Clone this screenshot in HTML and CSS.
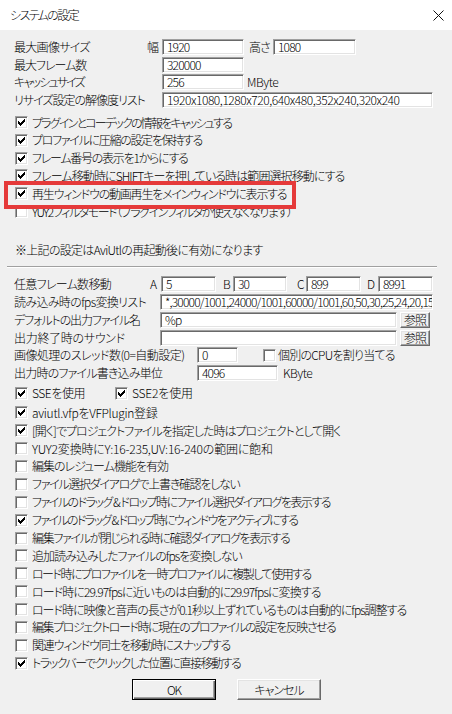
FILE: index.html
```html
<!DOCTYPE html>
<html lang="ja">
<head>
<meta charset="utf-8">
<title>システムの設定</title>
<link rel="stylesheet" href="styles.css">
</head>
<body>
<div class="window">
  <header class="titlebar">
    <span class="title t16">システムの設定</span>
    <svg class="close" width="11" height="11" viewBox="0 0 11 11"><path d="M0.5 0.5L10.5 10.5M10.5 0.5L0.5 10.5" stroke="#111" stroke-width="1" fill="none"/></svg>
  </header>
  <main class="client">
    <section class="sec1">
      <div class="row">
        <span class="lbl w133 t07">最大画像サイズ</span>
        <span class="pfx w15">幅</span>
        <div class="edit w82">1920</div>
        <span class="pfx2">高さ</span>
        <div class="edit w83">1080</div>
      </div>
      <div class="row">
        <span class="lbl w148">最大フレーム数</span>
        <div class="edit w82">320000</div>
      </div>
      <div class="row">
        <span class="lbl w148 t18">キャッシュサイズ</span>
        <div class="edit w82">256</div>
        <span class="unit">MByte</span>
      </div>
      <div class="row">
        <span class="lbl w148">リサイズ設定の解像度リスト</span>
        <div class="edit w271 e045">1920x1080,1280x720,640x480,352x240,320x240</div>
      </div>

      <div class="checks checks1">
        <label class="row crow"><span class="cb on"></span><span class="ct t18">プラグインとコーデックの情報をキャッシュする</span></label>
        <label class="row crow"><span class="cb on"></span><span class="ct t13">プロファイルに圧縮の設定を保持する</span></label>
        <label class="row crow"><span class="cb on"></span><span class="ct t125">フレーム番号の表示を1からにする</span></label>
        <label class="row crow"><span class="cb on"></span><span class="ct t09">フレーム移動時にSHIFTキーを押している時は範囲選択移動にする</span></label>
        <label class="row crow"><span class="cb on"></span><span class="ct t12">再生ウィンドウの動画再生をメインウィンドウに表示する</span></label>
        <label class="row crow"><span class="cb"></span><span class="ct t145">YUY2フィルタモード（プラグインフィルタが使えなくなります）</span></label>
        <div class="highlight"></div>
      </div>

      <p class="note t07">※上記の設定はAviUtlの再起動後に有効になります</p>
    </section>

    <hr class="sep">

    <section class="sec2">
      <div class="row">
        <span class="lbl w136 t07">任意フレーム数移動</span>
        <span class="key ka">A</span>
        <div class="edit w55">5</div>
        <span class="key kb">B</span>
        <div class="edit w54">30</div>
        <span class="key kc">C</span>
        <div class="edit w55">899</div>
        <span class="key kd">D</span>
        <div class="edit w55">8991</div>
      </div>
      <div class="row">
        <span class="lbl w146 t065">読み込み時のfps変換リスト</span>
        <div class="edit w273">*,30000/1001,24000/1001,60000/1001,60,50,30,25,24,20,15,12,10,8,5,1</div>
      </div>
      <div class="row">
        <span class="lbl w146 t11">デフォルトの出力ファイル名</span>
        <div class="edit w237">%p</div>
        <button class="btn ref" type="button">参照</button>
      </div>
      <div class="row">
        <span class="lbl w146 t03">出力終了時のサウンド</span>
        <div class="edit w237"></div>
        <button class="btn ref" type="button">参照</button>
      </div>
      <div class="row">
        <span class="lbl w183 t055">画像処理のスレッド数(0=自動設定)</span>
        <div class="edit w41">0</div>
        <label class="inline-check cpu"><span class="cb"></span><span class="ct t075">個別のCPUを割り当てる</span></label>
      </div>
      <div class="row">
        <span class="lbl w183 t08">出力時のファイル書き込み単位</span>
        <div class="edit w81">4096</div>
        <span class="unit u5">KByte</span>
      </div>

      <div class="row crow sse">
        <label class="inline-check sse1"><span class="cb on"></span><span class="ct t045">SSEを使用</span></label>
        <label class="inline-check sse2"><span class="cb on"></span><span class="ct t02">SSE2を使用</span></label>
      </div>

      <div class="checks checks2">
        <label class="row crow"><span class="cb on"></span><span class="ct t03">aviutl.vfpをVFPlugin登録</span></label>
        <label class="row crow"><span class="cb on"></span><span class="ct">[開く]でプロジェクトファイルを指定した時はプロジェクトとして開く</span></label>
        <label class="row crow"><span class="cb"></span><span class="ct t02">YUY2変換時にY:16-235,UV:16-240の範囲に飽和</span></label>
        <label class="row crow"><span class="cb"></span><span class="ct">編集のレジューム機能を有効</span></label>
        <label class="row crow"><span class="cb"></span><span class="ct t13">ファイル選択ダイアログで上書き確認をしない</span></label>
        <label class="row crow"><span class="cb"></span><span class="ct t15">ファイルのドラッグ &amp; ドロップ時にファイル選択ダイアログを表示する</span></label>
        <label class="row crow"><span class="cb on"></span><span class="ct t165">ファイルのドラッグ &amp; ドロップ時にウィンドウをアクティブにする</span></label>
        <label class="row crow"><span class="cb"></span><span class="ct t135">編集ファイルが閉じられる時に確認ダイアログを表示する</span></label>
        <label class="row crow"><span class="cb"></span><span class="ct t095">追加読み込みしたファイルのfpsを変換しない</span></label>
        <label class="row crow"><span class="cb"></span><span class="ct t15">ロード時にプロファイルを一時プロファイルに複製して使用する</span></label>
        <label class="row crow"><span class="cb"></span><span class="ct t09">ロード時に29.97fpsに近いものは自動的に29.97fpsに変換する</span></label>
        <label class="row crow"><span class="cb"></span><span class="ct">ロード時に映像と音声の長さが0.1秒以上ずれているものは自動的にfps調整する</span></label>
        <label class="row crow"><span class="cb"></span><span class="ct t145">編集プロジェクトロード時に現在のプロファイルの設定を反映させる</span></label>
        <label class="row crow"><span class="cb"></span><span class="ct t12">関連ウィンドウ同士を移動時にスナップする</span></label>
        <label class="row crow"><span class="cb on"></span><span class="ct t145">トラックバーでクリックした位置に直接移動する</span></label>
      </div>
    </section>

    <footer class="buttons">
      <button class="btn main ok" type="button">OK</button>
      <button class="btn main" type="button">キャンセル</button>
    </footer>
  </main>
</div>
</body>
</html>
```

FILE: styles.css
```css
* { box-sizing: border-box; }

html, body {
  margin: 0;
  padding: 0;
}

body {
  width: 452px;
  height: 714px;
  overflow: hidden;
  background: #f0f0f0;
  color: #000;
  font-family: "Noto Sans CJK JP", "Liberation Sans", sans-serif;
  font-size: 12px;
  font-weight: 300;
  letter-spacing: -1px;
  font-feature-settings: "palt";
}

.window {
  width: 452px;
  height: 714px;
  background: #f0f0f0;
}

/* title bar */
.titlebar {
  height: 30px;
  background: #fff;
  display: flex;
  align-items: center;
  justify-content: space-between;
  padding: 0 8px 0 10px;
}

.title {
  line-height: 14px;
}

.close {
  display: block;
}

/* client area */
.client {
  padding: 8px 0 0 14px;
}

.row {
  display: flex;
  align-items: center;
  height: 17.8px;
  white-space: nowrap;
  line-height: 14px;
}

.lbl { flex: none; }
.w133 { width: 133px; }
.w136 { width: 136px; }
.w146 { width: 146px; }
.w148 { width: 148px; }
.w183 { width: 183px; }

.pfx { flex: none; }
.w15 { width: 15px; }
.pfx2 { flex: none; width: 29px; padding-left: 5px; }
.unit { margin-left: 3px; letter-spacing: -0.4px; }
.u5 { margin-left: 5px; }

/* text fields */
.edit {
  flex: none;
  height: 16px;
  background: #fff;
  border: 1px solid;
  border-color: #a0a0a0 #fff #fff #a0a0a0;
  box-shadow: inset 1px 1px 0 #696969, inset -1px -1px 0 #e3e3e3;
  padding: 0 2px 0 4px;
  line-height: 14px;
  letter-spacing: -0.8px;
  overflow: hidden;
  white-space: nowrap;
}

.e045 { letter-spacing: -0.45px; }

.w41 { width: 41px; }
.w54 { width: 54px; }
.w55 { width: 55px; }
.w81 { width: 81px; }
.w82 { width: 82px; }
.w83 { width: 83px; }
.w237 { width: 237px; }
.w271 { width: 271px; }
.w273 { width: 273px; }

.key { flex: none; letter-spacing: 0; }
.ka { width: 11px; }
.kb { width: 17px; padding-left: 7px; }
.kc { width: 19px; padding-left: 10px; }
.kd { width: 17px; padding-left: 6px; }

/* per-label tracking, to match the proportional widths of the original UI font */
.t02 { letter-spacing: -0.2px; }
.t03 { letter-spacing: -0.3px; }
.t045 { letter-spacing: -0.45px; }
.t055 { letter-spacing: -0.55px; }
.t065 { letter-spacing: -0.65px; }
.t07 { letter-spacing: -0.7px; }
.t075 { letter-spacing: -0.75px; }
.t08 { letter-spacing: -0.8px; }
.t09 { letter-spacing: -0.9px; }
.t095 { letter-spacing: -0.95px; }
.t11 { letter-spacing: -1.1px; }
.t12 { letter-spacing: -1.2px; }
.t125 { letter-spacing: -1.25px; }
.t13 { letter-spacing: -1.3px; }
.t135 { letter-spacing: -1.35px; }
.t145 { letter-spacing: -1.45px; }
.t15 { letter-spacing: -1.5px; }
.t16 { letter-spacing: -1.6px; }
.t165 { letter-spacing: -1.65px; }
.t18 { letter-spacing: -1.8px; }

/* checkboxes */
.checks {
  position: relative;
}

.checks1 {
  margin-top: 4.5px;
}

.crow {
  padding-left: 1px;
}

.cb {
  flex: none;
  position: relative;
  width: 13px;
  height: 13px;
  background: #fff;
  border: 1px solid;
  border-color: #a0a0a0 #fff #fff #a0a0a0;
  box-shadow: inset 1px 1px 0 #696969, inset -1px -1px 0 #e3e3e3;
}

.cb.on::after {
  content: "";
  position: absolute;
  left: 2px;
  top: 2px;
  width: 7px;
  height: 7px;
  background: no-repeat center / 7px 7px url("data:image/svg+xml;utf8,<svg xmlns='http://www.w3.org/2000/svg' width='7' height='7' viewBox='0 0 7 7'><path d='M0 2h1v1h1v1h1v-1h1v-1h1v-1h1v-1h1v3h-1v1h-1v1h-1v1h-1v1h-1v-1h-1v-1h-1z' fill='%23000'/></svg>");
}

.ct {
  margin-left: 4px;
}

.highlight {
  position: absolute;
  left: -10px;
  top: 67.5px;
  width: 292px;
  height: 28px;
  border: 4px solid #e53a3a;
  pointer-events: none;
}

.note {
  margin: 20.5px 0 0 1px;
  height: 17.8px;
  line-height: 17.8px;
  white-space: nowrap;
}

.sep {
  margin: 7px 0 0 -7px;
  width: 430px;
  height: 2px;
  border: 0;
  border-top: 1px solid #a0a0a0;
  border-bottom: 1px solid #fff;
}

.sec2 {
  margin-top: 7.6px;
}

.inline-check {
  display: flex;
  align-items: center;
}

.cpu {
  margin-left: 25px;
}

.cpu .ct { margin-left: 2px; }

.sse {
  margin-top: 2px;
}

.sse1 {
  width: 100px;
}

.checks2 {
  margin-top: 1.9px;
}

.checks2 .row {
  height: 17.9px;
}

/* buttons */
.btn {
  font-family: inherit;
  font-size: 12px;
  font-weight: 300;
  letter-spacing: -1px;
  font-feature-settings: "palt";
  color: #000;
  background: #f0f0f0;
  border: 1px solid;
  border-color: #fff #696969 #696969 #fff;
  box-shadow: inset -1px -1px 0 #a0a0a0, inset 1px 1px 0 #e3e3e3;
  padding: 0;
  margin: 0;
  line-height: 14px;
}

.ref {
  flex: none;
  width: 30px;
  height: 16px;
  margin-left: 3px;
}

.buttons {
  display: flex;
  margin-top: 7px;
  padding-left: 118px;
  gap: 21px;
}

.main {
  width: 84px;
  height: 21px;
}

.ok {
  border-color: #000;
  box-shadow: inset 1px 1px 0 #fff, inset -1px -1px 0 #696969, inset -2px -2px 0 #a0a0a0;
}
```
